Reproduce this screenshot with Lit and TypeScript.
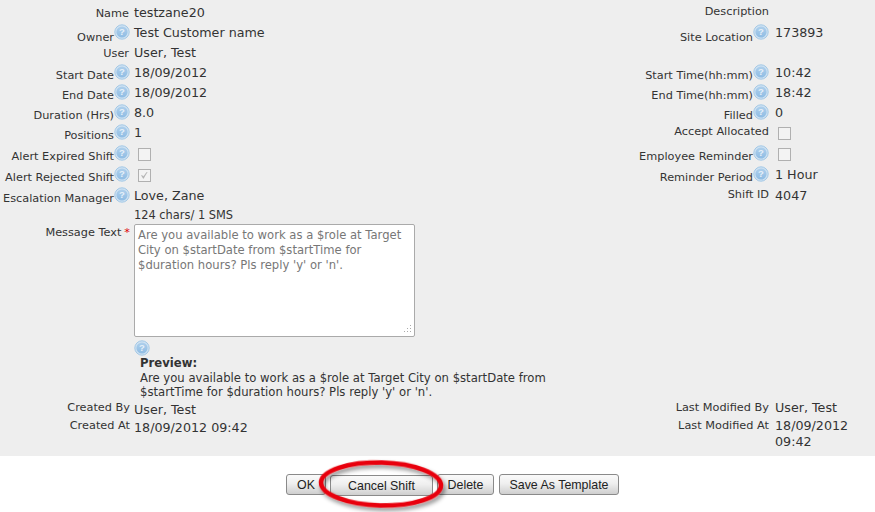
import { LitElement, html, css, svg } from 'lit';
import { customElement } from 'lit/decorators.js';

const MESSAGE = "Are you available to work as a $role at Target City on $startDate from $startTime for $duration hours? Pls reply 'y' or 'n'.";

const helpIcon = () => html`<svg class="help" viewBox="0 0 16 16" width="16" height="16">
  <defs>
    <linearGradient id="hg" x1="0" y1="0" x2="0" y2="1">
      <stop offset="0" stop-color="#afd0ec"></stop>
      <stop offset="1" stop-color="#8fbce3"></stop>
    </linearGradient>
  </defs>
  ${svg`<circle cx="8" cy="8" r="7.2" fill="#cfe2f2" stroke="#a3c8e6" stroke-width="1"></circle>
  <circle cx="8" cy="8" r="5.6" fill="url(#hg)"></circle>
  <text x="8" y="11.3" text-anchor="middle" font-family="Liberation Sans" font-weight="700" font-size="9.5" fill="#e6f0f9">?</text>`}
</svg>`;

const checkbox = (checked = false) => html`<span class="check">
  ${checked
    ? html`<svg viewBox="0 0 13 13" width="11" height="11"><path d="M3 6.5 L5.2 10 L9.5 2.5 L5.6 7.6 Z" fill="#b0b0b0" stroke="#b0b0b0" stroke-width="0.7"></path></svg>`
    : ''}
</span>`;

@customElement('app-root')
export class AppRoot extends LitElement {
  static override styles = css`
    :host {
      display: block;
      width: 875px;
      height: 512px;
      overflow: hidden;
      background: #fff;
      font-family: 'DejaVu Sans', Verdana, sans-serif;
      color: #333;
    }
    .panel {
      height: 456px;
      box-sizing: border-box;
      padding-top: 3px;
      background: #eee;
      display: grid;
      grid-template-columns: 130px 470px 169px 106px;
      grid-template-rows:
        20px 20px 20px 20px 20px 20px 21px 21px 21px 20px 18px
        116px 16px 44px 18px auto;
    }
    .label {
      display: flex;
      justify-content: flex-end;
      align-items: flex-start;
      font-size: 11.3px;
      line-height: 20px;
      white-space: nowrap;
    }
    .label.plain {
      padding-right: 1px;
      padding-top: 1px;
    }
    .label.up {
      line-height: 18px;
    }
    .label.tight {
      line-height: 16px;
    }
    .label.with-help span {
      margin-top: 3px;
    }
    .label.with-help.low span {
      margin-top: 5px;
    }
    .help {
      flex: none;
      margin-top: 1px;
    }
    .value {
      padding-left: 4px;
      font-size: 12.7px;
      line-height: 20px;
      white-space: nowrap;
    }
    .right.value {
      padding-left: 6px;
      white-space: normal;
    }
    .right.label {
      grid-column: 3;
    }
    .small {
      font-size: 11.4px;
      line-height: 18px;
    }
    .stacked {
      line-height: 16px;
    }
    .check {
      display: flex;
      align-items: center;
      justify-content: center;
      box-sizing: border-box;
      width: 13px;
      height: 13px;
      margin: 4px 0 0 4px;
      background: #f3f3f3;
      border: 1px solid #b0b0b0;
    }
    .right .check {
      margin-left: 3px;
    }
    .req {
      color: #d00;
      margin-left: 3px;
    }
    .area {
      position: relative;
      width: 281px;
      height: 113px;
    }
    textarea {
      display: block;
      box-sizing: border-box;
      width: 100%;
      height: 100%;
      margin: 0;
      padding: 3px;
      background: #fff;
      border: 1px solid #aaa;
      border-radius: 2px;
      outline: none;
      resize: none;
      font: 11.6px/15px 'DejaVu Sans', Verdana, sans-serif;
      color: #777;
    }
    .grip {
      position: absolute;
      right: 3px;
      bottom: 3px;
    }
    .help-row {
      line-height: 0;
    }
    .help-row .help {
      margin-top: 0;
    }
    .preview {
      width: 412px;
      padding-left: 10px;
      font-size: 11.65px;
      line-height: 14.5px;
    }
    .preview b {
      display: block;
      font-weight: 700;
    }
    .tools {
      position: relative;
      display: flex;
      padding: 18px 0 0 286px;
      font-family: 'Liberation Sans', Arial, sans-serif;
    }
    button {
      box-sizing: border-box;
      height: 21px;
      padding: 0;
      background: linear-gradient(#fafafa, #efefef 45%, #cfcfcf);
      border: 1px solid #8a8a8a;
      border-radius: 3px;
      font: 12.4px 'Liberation Sans', Arial, sans-serif;
      color: #222;
    }
    .ok { width: 40px; margin-right: 4px; }
    .cancel { width: 103px; margin: 1px 4px 0 0; }
    .del { width: 57px; margin-right: 5px; }
    .tmpl { width: 120px; }
    .ring {
      position: absolute;
      left: 310px;
      top: 0;
      overflow: visible;
    }
  `;

  override render() {
    return html`
      <div class="panel">
        <div class="label plain"><span>Name</span></div>
        <div class="value">testzane20</div>
        <div class="right label up"><span>Description</span></div>
        <div class="right value"></div>

        <div class="label with-help low"><span>Owner</span>${helpIcon()}</div>
        <div class="value">Test Customer name</div>
        <div class="right label with-help low"><span>Site Location</span>${helpIcon()}</div>
        <div class="right value">173893</div>

        <div class="label plain"><span>User</span></div>
        <div class="value">User, Test</div>
        <div class="right label"></div>
        <div class="right value"></div>

        <div class="label with-help"><span>Start Date</span>${helpIcon()}</div>
        <div class="value">18/09/2012</div>
        <div class="right label with-help"><span>Start Time(hh:mm)</span>${helpIcon()}</div>
        <div class="right value">10:42</div>

        <div class="label with-help"><span>End Date</span>${helpIcon()}</div>
        <div class="value">18/09/2012</div>
        <div class="right label with-help"><span>End Time(hh:mm)</span>${helpIcon()}</div>
        <div class="right value">18:42</div>

        <div class="label with-help"><span>Duration (Hrs)</span>${helpIcon()}</div>
        <div class="value">8.0</div>
        <div class="right label with-help"><span>Filled</span>${helpIcon()}</div>
        <div class="right value">0</div>

        <div class="label with-help"><span>Positions</span>${helpIcon()}</div>
        <div class="value">1</div>
        <div class="right label up"><span>Accept Allocated</span></div>
        <div class="right value">${checkbox()}</div>

        <div class="label with-help"><span>Alert Expired Shift</span>${helpIcon()}</div>
        <div class="value">${checkbox()}</div>
        <div class="right label with-help"><span>Employee Reminder</span>${helpIcon()}</div>
        <div class="right value">${checkbox()}</div>

        <div class="label with-help"><span>Alert Rejected Shift</span>${helpIcon()}</div>
        <div class="value">${checkbox(true)}</div>
        <div class="right label with-help"><span>Reminder Period</span>${helpIcon()}</div>
        <div class="right value">1 Hour</div>

        <div class="label with-help"><span>Escalation Manager</span>${helpIcon()}</div>
        <div class="value">Love, Zane</div>
        <div class="right label up"><span>Shift ID</span></div>
        <div class="right value">4047</div>

        <div class="label"></div>
        <div class="value small">124 chars/ 1 SMS</div>
        <div class="right label"></div>
        <div class="right value"></div>

        <div class="label up"><span>Message Text</span><span class="req">*</span></div>
        <div class="value">
          <div class="area">
            <textarea readonly .value=${MESSAGE}></textarea>
            <svg class="grip" width="10" height="10" viewBox="0 0 10 10" fill="#aaa">
              <rect x="8" y="1" width="1" height="1"></rect>
              <rect x="8" y="4" width="1" height="1"></rect>
              <rect x="5" y="4" width="1" height="1"></rect>
              <rect x="8" y="7" width="1" height="1"></rect>
              <rect x="5" y="7" width="1" height="1"></rect>
              <rect x="2" y="7" width="1" height="1"></rect>
            </svg>
          </div>
        </div>
        <div class="right label"></div>
        <div class="right value"></div>

        <div class="label"></div>
        <div class="value help-row">${helpIcon()}</div>
        <div class="right label"></div>
        <div class="right value"></div>

        <div class="label"></div>
        <div class="preview"><b>Preview:</b>${MESSAGE}</div>
        <div class="right label"></div>
        <div class="right value"></div>

        <div class="label tight"><span>Created By</span></div>
        <div class="value">User, Test</div>
        <div class="right label tight"><span>Last Modified By</span></div>
        <div class="right value stacked">User, Test</div>

        <div class="label tight"><span>Created At</span></div>
        <div class="value">18/09/2012 09:42</div>
        <div class="right label tight"><span>Last Modified At</span></div>
        <div class="right value stacked">18/09/2012 09:42</div>
      </div>
      <div class="tools">
        <button class="ok">OK</button>
        <button class="cancel">Cancel Shift</button>
        <button class="del">Delete</button>
        <button class="tmpl">Save As Template</button>
        <svg class="ring" width="142" height="56" viewBox="0 0 142 56">
          <defs>
            <filter id="sh" x="-20%" y="-30%" width="140%" height="170%">
              <feDropShadow dx="2" dy="3" stdDeviation="2" flood-color="#000" flood-opacity="0.45"></feDropShadow>
            </filter>
          </defs>
          <ellipse cx="71" cy="28" rx="60" ry="21.5" fill="none" stroke="#e8000c" stroke-width="4.5" transform="rotate(1.5 71 28)" filter="url(#sh)"></ellipse>
        </svg>
      </div>
    `;
  }
}
